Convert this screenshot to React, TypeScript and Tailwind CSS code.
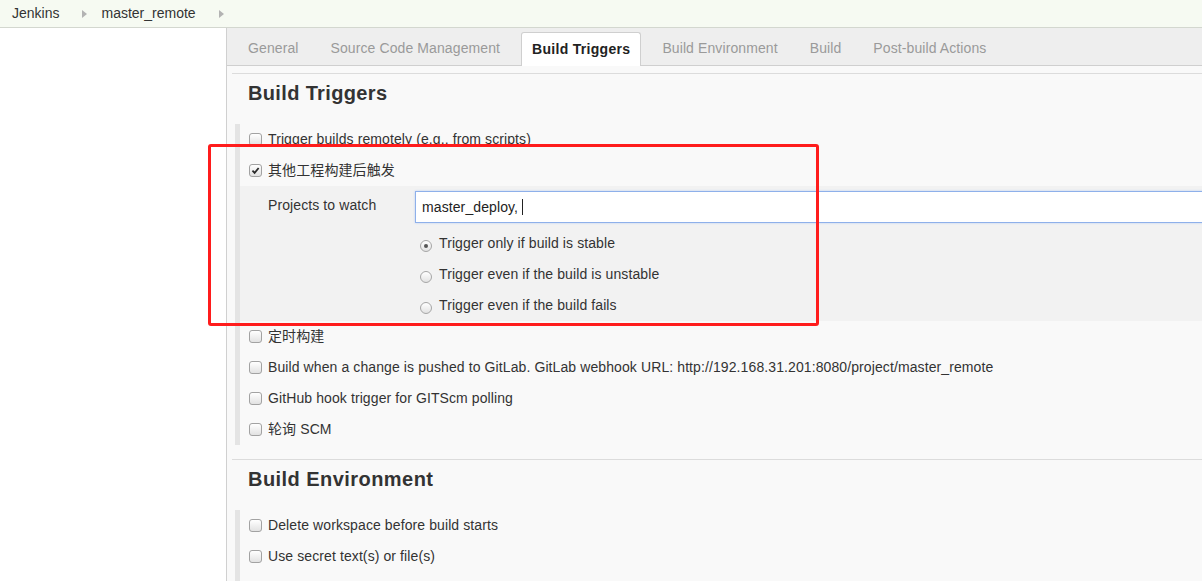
import React from "react";

function Crumb() {
  return (
    <svg viewBox="0 0 5 8" className="h-[8px] w-[5px]">
      <path d="M0 0 L5 4 L0 8 Z" fill="#b3b3b3" />
    </svg>
  );
}

function Checkbox({ checked = false }: { checked?: boolean }) {
  return (
    <span className="flex h-[13px] w-[13px] shrink-0 items-center justify-center rounded-[3px] border border-[#a2a2a2] bg-linear-to-b from-white to-[#e2e2e2]">
      {checked && (
        <svg viewBox="0 0 10 10" className="h-[9px] w-[9px]">
          <path d="M1.6 5.2 L4 7.6 L8.5 2.2" fill="none" stroke="#2a2a2a" strokeWidth="2" />
        </svg>
      )}
    </span>
  );
}

function Radio({ checked = false }: { checked?: boolean }) {
  return (
    <span className="mt-[5px] flex h-[12px] w-[12px] shrink-0 items-center justify-center rounded-full border border-[#a6a6a6] bg-linear-to-b from-white to-[#e2e2e2]">
      {checked && <span className="h-[4px] w-[4px] rounded-full bg-[#555]" />}
    </span>
  );
}

function CheckRow({ label, checked }: { label?: string; checked?: boolean }) {
  return (
    <div className="flex h-[31px] items-center pl-[9px]">
      <Checkbox checked={checked} />
      {label && (
        <span className="ml-[6px] whitespace-nowrap text-[14px] tracking-[0.1px] text-[#333]">{label}</span>
      )}
    </div>
  );
}

function RadioRow({ label, checked }: { label: string; checked?: boolean }) {
  return (
    <div className="flex h-[31px] items-center pl-[5px]">
      <Radio checked={checked} />
      <span className="ml-[7px] whitespace-nowrap text-[14px] tracking-[0.1px] text-[#333]">{label}</span>
    </div>
  );
}

const tabs = ["General", "Source Code Management", "Build Triggers", "Build Environment", "Build", "Post-build Actions"];

export default function App() {
  return (
    <div className="relative flex h-[581px] w-full flex-col overflow-hidden bg-white font-['Liberation_Sans','Noto_Sans_CJK_SC',sans-serif]">
      {/* breadcrumb */}
      <div className="flex h-[28px] shrink-0 items-center border-b border-[#d3d7cf] bg-[#f6faf2] pl-[12px] text-[14px] text-[#333]">
        <span>Jenkins</span>
        <span className="ml-[23px] mr-[14px] flex">
          <Crumb />
        </span>
        <span>master_remote</span>
        <span className="ml-[23px] flex">
          <Crumb />
        </span>
      </div>

      <div className="flex min-h-0 flex-1">
        <aside className="w-[226px] shrink-0 bg-white" />

        <main className="min-w-0 flex-1 border-l border-[#d0d0d0] bg-[#f9f9f9]">
          {/* tabs */}
          <div className="flex h-[38px] items-end border-b border-[#cfcfcf] bg-[#eeeeee]">
            {tabs.map((t) =>
              t === "Build Triggers" ? (
                <div
                  key={t}
                  className="-mb-px ml-[10px] flex h-[34px] items-center rounded-t-[3px] border border-b-0 border-[#cfcfcf] bg-white px-[10px] text-[14px] font-bold tracking-[0.3px] text-[#222]"
                >
                  {t}
                </div>
              ) : (
                <div key={t} className="ml-[10px] flex h-[33px] items-center px-[11px] text-[14px] tracking-[0.1px] text-[#9a9a9a]">
                  {t}
                </div>
              )
            )}
          </div>

          <div className="pl-[5px] pt-[7px]">
            {/* Build Triggers */}
            <section className="border-t border-[#dcdcdc]">
              <h2 className="pl-[16px] pt-[7px] text-[20px] font-bold leading-[24px] tracking-[0.35px] text-[#333]">Build Triggers</h2>
              <div className="ml-[3px] mt-[19px] border-l-[5px] border-[#e4e4e4]">
                <CheckRow label="Trigger builds remotely (e.g., from scripts)" />
                <CheckRow label="其他工程构建后触发" checked />
                <div className="flex bg-[#f2f2f2] pl-[28px] pt-[5px]">
                  <div className="flex h-[32px] w-[147px] shrink-0 items-center pb-[4px] text-[14px] tracking-[0.1px] text-[#333]">
                    Projects to watch
                  </div>
                  <div className="flex flex-col">
                    <div className="flex h-[32px] w-[820px] items-center border border-[#8eb0ea] bg-white pl-[6px] text-[14px] tracking-[0.1px] text-[#222] shadow-[0_0_2px_#b9cef3]">
                      <span>master_deploy,&nbsp;</span>
                      <span className="h-[16px] w-px bg-[#222]" />
                    </div>
                    <div className="mt-[5px]">
                      <RadioRow label="Trigger only if build is stable" checked />
                      <RadioRow label="Trigger even if the build is unstable" />
                      <RadioRow label="Trigger even if the build fails" />
                    </div>
                  </div>
                </div>
                <CheckRow label="定时构建" />
                <CheckRow label="Build when a change is pushed to GitLab. GitLab webhook URL: http://192.168.31.201:8080/project/master_remote" />
                <CheckRow label="GitHub hook trigger for GITScm polling" />
                <CheckRow label="轮询 SCM" />
              </div>
            </section>

            {/* Build Environment */}
            <section className="mt-[14px] border-t border-[#dcdcdc]">
              <h2 className="pl-[16px] pt-[7px] text-[20px] font-bold leading-[24px] tracking-[0.45px] text-[#333]">Build Environment</h2>
              <div className="ml-[3px] mt-[19px] border-l-[5px] border-[#e4e4e4]">
                <CheckRow label="Delete workspace before build starts" />
                <CheckRow label="Use secret text(s) or file(s)" />
                <CheckRow />
              </div>
            </section>
          </div>
        </main>
      </div>

      {/* annotation */}
      <div className="pointer-events-none absolute left-[208px] top-[144px] h-[182px] w-[611px] rounded-[3px] border-[3px] border-[#ff1c1c]" />
    </div>
  );
}
